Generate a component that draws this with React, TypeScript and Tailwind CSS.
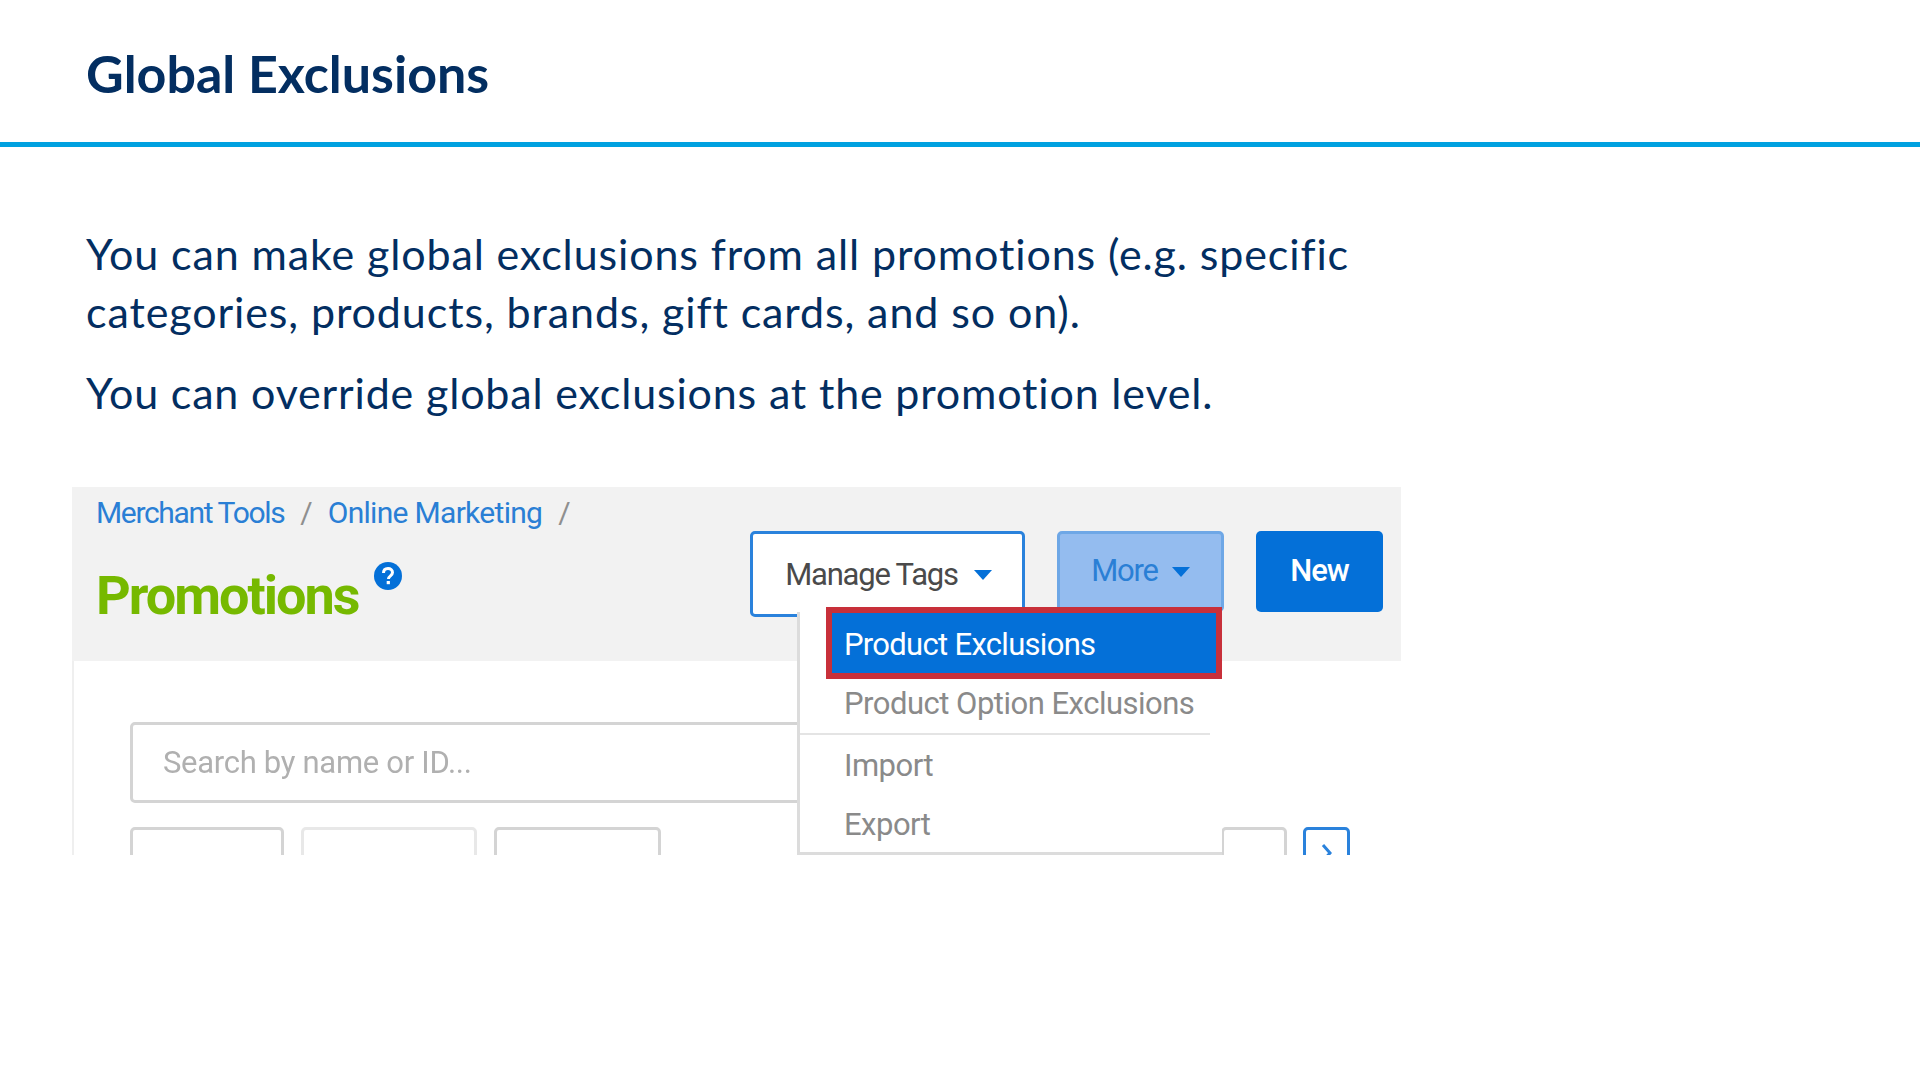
export default function App() {
  const ui = "font-['Roboto',sans-serif]";
  return (
    <div className="w-[1920px] h-[1080px] bg-white overflow-hidden font-['Lato',sans-serif] text-[#032e61]">
      <header className="h-[147px] border-b-[5px] border-[#00a1e0] pl-[86px] pt-[44px]">
        <h1 className="text-[52px] leading-[58px] font-bold">Global Exclusions</h1>
      </header>
      <section className="pl-[86px] pt-[78px] text-[43px] leading-[58px] tracking-[0.88px]">
        <p>You can make global exclusions from all promotions (e.g. specific<br /><span className="tracking-[0.9px]">categories, products, brands, gift cards, and so on).</span></p>
        <p className="mt-[23px] tracking-[0.83px]">You can override global exclusions at the promotion level.</p>
      </section>

      <div className={`${ui} relative ml-[72px] mt-[65px] w-[1329px] h-[368px] overflow-hidden blur-[0.4px]`}>
        <div className="h-[174px] bg-[#f2f2f2] flex justify-between pl-[24px] pr-[18px]">
          <div>
            <div className="flex items-center gap-[16px] h-[50px] text-[30px] text-[#2a7fd5]">
              <span className="tracking-[-1.35px]">Merchant Tools</span>
              <span className="text-[#8f8f8f]">/</span>
              <span className="tracking-[-0.7px] -ml-[1px]">Online Marketing</span>
              <span className="text-[#8f8f8f]">/</span>
            </div>
            <div className="flex mt-[18px]">
              <span className="text-[54px] leading-[82px] font-bold tracking-[-2px] text-[#76b900]">Promotions</span>
              <svg viewBox="0 0 28 28" className="w-[28px] h-[28px] ml-[15px] mt-[7px]">
                <circle cx="14" cy="14" r="14" fill="#0470d8" />
                <path d="M9.5 11c0-3 2-4.5 4.5-4.5s4.5 1.6 4.5 4c0 3.4-4 3.2-4 6.5" fill="none" stroke="#fff" strokeWidth="3" />
                <rect x="12.7" y="19" width="3.2" height="3.2" fill="#fff" />
              </svg>
            </div>
          </div>
          <div className="flex items-start gap-[32px] pt-[44px]">
            <button className="w-[275px] h-[86px] rounded-[5px] border-[3px] border-[#2a82dc] bg-white text-[#4a4a4a] text-[31px] tracking-[-1.2px] pt-[2px] pl-[2px] flex items-center justify-center gap-[16px]">
              Manage Tags
              <span className="w-0 h-0 border-x-[9px] border-x-transparent border-t-[10px] border-t-[#0470d8]" />
            </button>
            <button className="w-[167px] h-[81px] rounded-[5px] border-[3px] border-[#6ea7e6] bg-[#94bcef] text-[#2a7fd5] text-[31px] tracking-[-1.2px] flex items-center justify-center gap-[14px]">
              More
              <span className="w-0 h-0 border-x-[9px] border-x-transparent border-t-[10px] border-t-[#0470d8]" />
            </button>
            <button className="w-[127px] h-[81px] rounded-[5px] bg-[#0470d8] text-white text-[31px] font-medium tracking-[-1px]">New</button>
          </div>
        </div>

        <div className="h-[194px] border-l-2 border-[#efefef] pl-[56px] pt-[61px] relative">
          <div className="w-[800px] h-[81px] rounded-[5px] border-[3px] border-[#d4d4d4] pl-[30px] pt-[2px] flex items-center text-[31px] tracking-[-0.3px] text-[#b0b0b0]">Search by name or ID...</div>
          <div className="flex mt-[24px] gap-[17px]">
            <div className="w-[154px] h-[40px] rounded-t-[5px] border-[3px] border-[#d4d4d4]" />
            <div className="w-[176px] h-[40px] rounded-t-[5px] border-[3px] border-[#e8e8e8]" />
            <div className="w-[167px] h-[40px] rounded-t-[5px] border-[3px] border-[#d4d4d4]" />
            <div className="w-[66px] h-[40px] ml-[543px] rounded-t-[5px] border-[3px] border-[#d4d4d4]" />
            <div className="w-[47px] h-[40px] -ml-[1px] rounded-t-[5px] border-[3px] border-[#2a82dc] flex justify-center pt-[13px]">
              <svg viewBox="0 0 12 20" className="w-[12px] h-[20px]"><path d="M2 2l7 8-7 8" fill="none" stroke="#2a82dc" strokeWidth="3" /></svg>
            </div>
          </div>
        </div>

        <div className="absolute left-[725px] top-[125px] w-[425px] h-[243px] bg-white border-l-[3px] border-b-[3px] border-[#dcdcdc] text-[31px] tracking-[-0.5px] text-[#8a8a8a]">
          <div className="h-[60px]" />
          <div className="h-[61px] pl-[44px] pt-[4px] flex items-center">Product Option Exclusions</div>
          <div className="h-[2px] w-[410px] bg-[#e4e4e4]" />
          <div className="h-[59px] pl-[44px] pt-[4px] flex items-center">Import</div>
          <div className="h-[58px] pl-[44px] pt-[4px] flex items-center">Export</div>
        </div>
        <div className="absolute left-[754px] top-[120px] w-[396px] h-[72px] bg-[#0470d8] border-[6px] border-[#c8303a] pl-[12px] pt-[5px] flex items-center text-white text-[31px] tracking-[-0.7px]">Product Exclusions</div>
      </div>
    </div>
  );
}
